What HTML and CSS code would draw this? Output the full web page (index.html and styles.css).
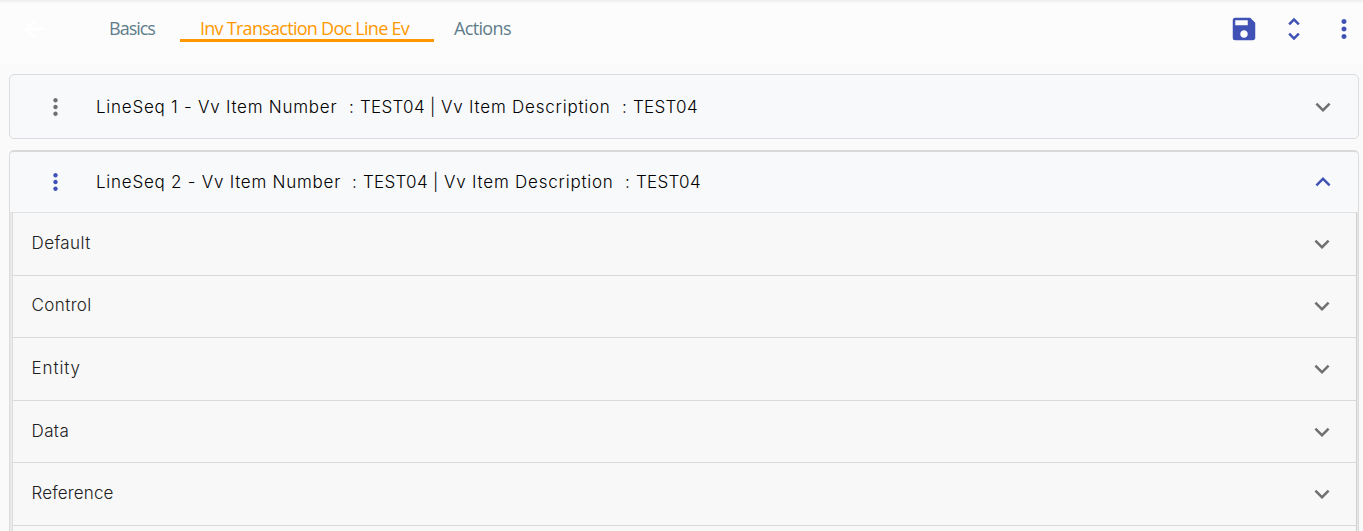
FILE: index.html
```html
<!DOCTYPE html>
<html lang="en">
<head>
<meta charset="utf-8">
<title>Inv Transaction Doc Line Ev</title>
<link rel="stylesheet" href="styles.css">
</head>
<body>
<svg class="defs" aria-hidden="true">
  <symbol id="chevron" viewBox="0 0 24 24"><path d="M7.41 8.59 12 13.17l4.59-4.58L18 10l-6 6-6-6z"/></symbol>
  <symbol id="dots" viewBox="0 0 24 24"><path d="M12 8c1.1 0 2-.9 2-2s-.9-2-2-2-2 .9-2 2 .9 2 2 2zm0 2c-1.1 0-2 .9-2 2s.9 2 2 2 2-.9 2-2-.9-2-2-2zm0 6c-1.100 0-2 .9-2 2s.9 2 2 2 2-.9 2-2-.9-2-2-2z"/></symbol>
</svg>
<header class="toolbar">
  <svg class="back" viewBox="0 0 24 24"><path d="M20 11H7.830l5.590-5.590L12 4l-8 8 8 8 1.410-1.410L7.830 13H20z"/></svg>
  <nav class="tabs">
    <a class="tab basics"><span>Basics</span></a>
    <a class="tab active"><span>Inv Transaction Doc Line Ev</span></a>
    <a class="tab actions"><span>Actions</span></a>
  </nav>
  <div class="tools">
    <svg class="icon save" viewBox="0 0 24 24"><path d="M17 3H5a2 2 0 0 0-2 2v14a2 2 0 0 0 2 2h14c1.100 0 2-.9 2-2V7l-4-4zm-5 16c-1.660 0-3-1.340-3-3s1.340-3 3-3 3 1.340 3 3-1.340 3-3 3zm3-10H5V5h10v4z"/></svg>
    <svg class="icon unfold" viewBox="0 0 24 24"><path d="M12 5.830 15.170 9l1.410-1.410L12 3 7.410 7.590 8.830 9 12 5.830zm0 12.340L8.830 15l-1.410 1.410L12 21l4.590-4.590L15.170 15 12 18.170z"/></svg>
    <svg class="icon more"><use href="#dots"/></svg>
  </div>
</header>
<main>
  <section class="card">
    <div class="card-head">
      <svg class="dots"><use href="#dots"/></svg>
      <h2 class="title"><span class="seq">LineSeq 1 - Vv Item Number</span><span class="colon">:</span><span class="code">TEST04</span><span class="bar">|</span><span class="desc">Vv Item Description</span><span class="colon">:</span><span class="code">TEST04</span></h2>
      <svg class="chevron"><use href="#chevron"/></svg>
    </div>
  </section>
  <section class="card open">
    <div class="card-head">
      <svg class="dots"><use href="#dots"/></svg>
      <h2 class="title"><span class="seq">LineSeq 2 - Vv Item Number</span><span class="colon">:</span><span class="code">TEST04</span><span class="bar">|</span><span class="desc">Vv Item Description</span><span class="colon">:</span><span class="code">TEST04</span></h2>
      <svg class="chevron up"><use href="#chevron"/></svg>
    </div>
    <div class="rows">
      <div class="row"><span class="default">Default</span><svg class="chevron"><use href="#chevron"/></svg></div>
      <div class="row"><span class="control">Control</span><svg class="chevron"><use href="#chevron"/></svg></div>
      <div class="row"><span class="entity">Entity</span><svg class="chevron"><use href="#chevron"/></svg></div>
      <div class="row"><span class="data">Data</span><svg class="chevron"><use href="#chevron"/></svg></div>
      <div class="row"><span class="reference">Reference</span><svg class="chevron"><use href="#chevron"/></svg></div>
    </div>
  </section>
</main>
</body>
</html>
```
FILE: styles.css
```css
* { box-sizing: border-box; }
body {
  margin: 0;
  height: 531px;
  display: flex;
  flex-direction: column;
  overflow: hidden;
  background: #fafafa;
  font-family: "Inter", "Liberation Sans", sans-serif;
}
svg { display: block; flex: none; fill: currentColor; }
.defs { display: none; }
.toolbar {
  flex: none;
  height: 64px;
  display: flex;
  background: linear-gradient(#ececec, #f6f6f6 2px, #fcfcfc 4px);
}
.back { width: 30px; height: 30px; margin: 14px 0 0 19px; color: #fff; }
.tabs {
  display: flex;
  margin-left: 40px;
  font-family: "Open Sans", sans-serif;
  font-size: 18px;
  font-weight: 400;
  color: #607d8b;
  white-space: nowrap;
}
.tab { height: 42px; padding: 15px 20px 0; line-height: 26px; }
.basics { width: 91px; letter-spacing: -1px; }
.active { width: 254px; color: #ff9800; border-bottom: 3px solid #ff9800; letter-spacing: -0.73px; }
.actions { letter-spacing: -0.65px; }
.tools { display: flex; margin-left: auto; color: #3f51b5; }
.icon { width: 30px; height: 30px; margin-top: 14px; }
.save { margin-right: 20px; }
.unfold { margin-right: 20px; }
.more { margin-right: 4px; }
main { flex: 1; min-height: 0; display: flex; flex-direction: column; padding: 10px 4px 0 9px; }
.card {
  flex: none;
  height: 65px;
  margin-bottom: 11px;
  background: #f8f9fb;
  border: 1px solid #dcdde0;
  border-radius: 5px;
}
.card-head { display: flex; align-items: center; height: 63px; padding: 1px 20px 0 32px; }
.dots { width: 27px; height: 30px; color: #707070; }
.title {
  display: flex;
  margin: 0 0 0 27px;
  font-size: 17px;
  font-weight: 300;
  line-height: 24px;
  white-space: pre;
  color: #000;
}
.seq { width: 253px; letter-spacing: 0.75px; }
.colon { width: 11px; }
.code { width: 70px; letter-spacing: 0.3px; }
.bar { width: 11px; }
.desc { width: 181px; letter-spacing: 0.78px; }
.chevron { width: 30px; height: 30px; margin-left: auto; color: #707070; }
.open {
  flex: 1;
  min-height: 0;
  margin-bottom: 0;
  display: flex;
  flex-direction: column;
  border-width: 2px 1px 0;
  border-color: #d9d9d9 #dcdcdc;
  border-radius: 5px 5px 0 0;
}
.open .card-head { flex: none; height: 61px; padding-top: 0; border-bottom: 1px solid #e2e2e2; }
.open .dots { color: #3f51b5; }
.open .seq { width: 256px; }
.open .up { color: #3f51b5; transform: rotate(180deg); }
.rows { flex: 1; border: solid #e8e8e8; border-width: 0 1px; background: #f8f8f8; box-shadow: inset 1px 0 #ececec, inset 2px 0 #dcdcdc, inset -1px 0 #d0d0d0; }
.row {
  display: flex;
  align-items: center;
  height: 62.6px;
  margin-left: 1px;
  padding: 0 20px 0 19.5px;
  border-bottom: 1px solid #dadada;
  font-size: 17px;
  font-weight: 300;
  letter-spacing: 0.4px;
  color: #212121;
}
.row span { padding-bottom: 2px; }
.entity { letter-spacing: 0.9px; }
.reference { letter-spacing: 0.15px; }
```
